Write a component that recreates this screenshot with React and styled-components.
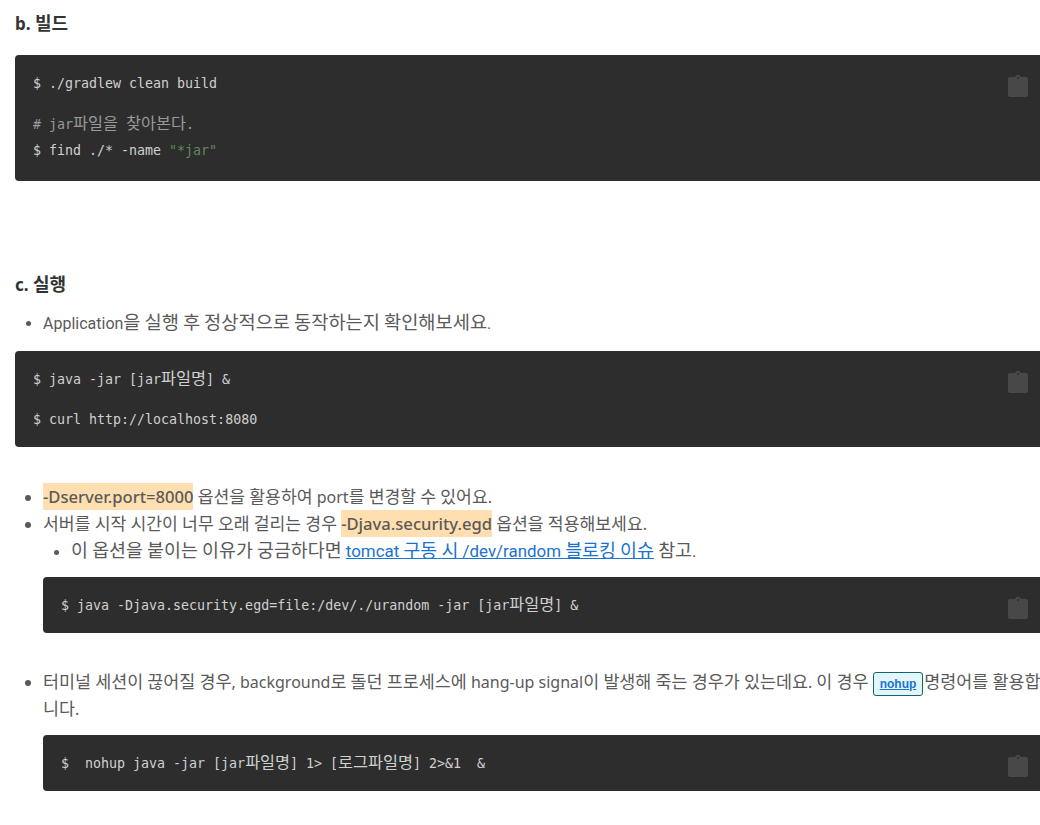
import React from "react";
import styled, { createGlobalStyle } from "styled-components";

const GlobalStyle = createGlobalStyle`
  html, body {
    margin: 0;
    padding: 0;
    width: 1040px;
    height: 825px;
    overflow: hidden;
    background: #ffffff;
  }
`;

const Article = styled.div`
  box-sizing: border-box;
  width: 1045px;
  padding: 11px 0 0 15px;
  color: #5a5a5a;
  font-family: "Noto Sans", "Noto Sans CJK KR", sans-serif;
  font-size: 16px;
  line-height: 26px;
`;

const Heading = styled.h4`
  --ko: 18px;
  margin: ${(p) => p.$top || 0}px 0 18px;
  color: #333333;
  font-size: 17px;
  font-weight: 700;
  line-height: 26px;
`;

/* hangul in the original falls back to a wider font, so it is sized on its own */
const Ko = styled.span`
  font-family: "Noto Sans CJK KR", sans-serif;
  font-size: var(--ko);
  line-height: 1;
`;

const CodeBlock = styled.pre`
  --ko: 16.3px;
  position: relative;
  margin: ${(p) => p.$top || 0}px 0 0 ${(p) => p.$indent || 0}px;
  padding: 16px 18px ${(p) => p.$padBottom || 14}px;
  border-radius: 4px 0 0 4px;
  background: #2d2d2d;
  color: #d0d0d0;
  font-family: "DejaVu Sans Mono", "Noto Sans CJK KR", monospace;
  font-size: 13.3px;
  line-height: 26px;
`;

const CodeLine = styled.div`
  margin-bottom: ${(p) => p.$gap || 0}px;
`;

const Comment = styled.span`
  color: #999999;
`;

const Str = styled.span`
  color: #5f8a56;
`;

const CopyIcon = styled.svg`
  position: absolute;
  right: 17px;
  top: 20px;
  width: 20px;
  height: 22px;
  fill: #484848;
`;

const List = styled.ul`
  margin: ${(p) => p.$top || 0}px 0 0;
  padding: 0 0 0 28px;
`;

const SubList = styled.ul`
  margin: 1px 0 0;
  padding: 0 0 0 28px;
  list-style: disc;
`;

const Item = styled.li`
  --ko: ${(p) => p.$ko || "17.2px"};
  margin: ${(p) => p.$top || 0}px 0 0;
  font-size: ${(p) => p.$size || "16px"};
  font-family: ${(p) => (p.$roboto ? "Roboto" : '"Noto Sans"')}, "Noto Sans CJK KR", sans-serif;
`;

const Mark = styled.span`
  padding: 2px 0;
  background: #ffdfb0;
  font-size: 16.6px;
  font-weight: 500;
`;

const Link = styled.a`
  color: #1a73d0;
  text-decoration: underline;
`;

const Tag = styled.a`
  display: inline-block;
  box-sizing: border-box;
  height: 24px;
  margin-right: 1px;
  padding: 0 6px;
  border: 1px solid #0f6670;
  border-radius: 3px;
  background: #e2f6fa;
  color: #1a73d0;
  font-family: "Liberation Sans", sans-serif;
  font-size: 12px;
  font-weight: 700;
  line-height: 22px;
  text-decoration: underline;
  vertical-align: middle;
`;

const T = ({ children }) =>
  children.split(/([가-힣]+)/).map((part, i) =>
    i % 2 ? <Ko key={i}>{part}</Ko> : part
  );

const Copy = () => (
  <CopyIcon viewBox="0 0 20 22">
    <path d="M2 2h5.2a2.9 2.9 0 0 1 5.6 0H18a2 2 0 0 1 2 2v16a2 2 0 0 1-2 2H2a2 2 0 0 1-2-2V4a2 2 0 0 1 2-2z" />
    <circle cx="10" cy="3" r="1" fill="#2d2d2d" />
  </CopyIcon>
);

export default function App() {
  return (
    <Article>
      <GlobalStyle />
      <Heading><T>b. 빌드</T></Heading>
      <CodeBlock $padBottom={17}>
        <Copy />
        <CodeLine $gap={15}>$ ./gradlew clean build</CodeLine>
        <CodeLine>
          <Comment><T># jar파일을 찾아본다.</T></Comment>
        </CodeLine>
        <CodeLine>
          $ find ./* -name <Str>"*jar"</Str>
        </CodeLine>
      </CodeBlock>

      <Heading $top={91}><T>c. 실행</T></Heading>
      <List $top={-5}>
        <Item $roboto $ko="18.7px"><T>Application을 실행 후 정상적으로 동작하는지 확인해보세요.</T></Item>
      </List>
      <CodeBlock $top={14}>
        <Copy />
        <CodeLine $gap={14}><T>$ java -jar [jar파일명] &</T></CodeLine>
        <CodeLine>$ curl http://localhost:8080</CodeLine>
      </CodeBlock>

      <List $top={37}>
        <Item>
          <Mark>-Dserver.port=8000</Mark> <T>옵션을 활용하여 port를 변경할 수 있어요.</T>
        </Item>
        <Item $top={1}>
          <T>서버를 시작 시간이 너무 오래 걸리는 경우</T> <Mark>-Djava.security.egd</Mark> <T>옵션을 적용해보세요.</T>
          <SubList>
            <Item $roboto $ko="18.4px" $size="16.9px">
              <T>이 옵션을 붙이는 이유가 궁금하다면</T> <Link><T>tomcat 구동 시 /dev/random 블로킹 이슈</T></Link> <T>참고.</T>
            </Item>
          </SubList>
        </Item>
      </List>
      <CodeBlock $top={13} $indent={28}>
        <Copy />
        <CodeLine><T>$ java -Djava.security.egd=file:/dev/./urandom -jar [jar파일명] &</T></CodeLine>
      </CodeBlock>

      <List $top={36}>
        <Item $ko="17.4px">
          <T>터미널 세션이 끊어질 경우, background로 돌던 프로세스에 hang-up signal이 발생해 죽는 경우가 있는데요. 이 경우</T> <Tag>nohup</Tag><T>명령어를 활용합니다.</T>
        </Item>
      </List>
      <CodeBlock $top={13} $indent={28}>
        <Copy />
        <CodeLine><T>$  nohup java -jar [jar파일명] 1> [로그파일명] 2>&1  &</T></CodeLine>
      </CodeBlock>
    </Article>
  );
}
